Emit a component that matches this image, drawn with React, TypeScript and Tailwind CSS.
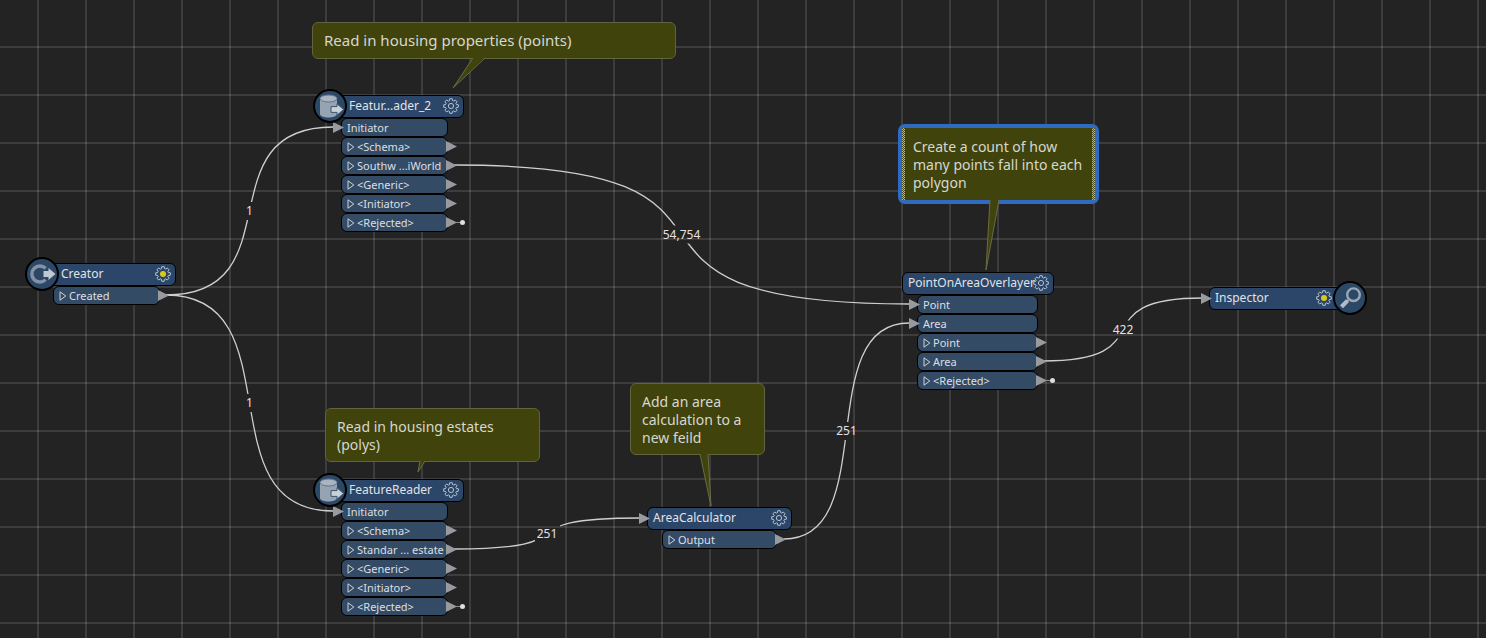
import type { ReactNode } from 'react';

type IconName = 'creator' | 'reader' | 'inspector';

interface Port {
  label: string;
  rejected?: boolean;
}

interface Transformer {
  id: string;
  name: string;
  x: number;
  y: number;
  width: number;
  portWidth: number;
  icon?: IconName;
  needsParams?: boolean;
  // the incoming arrow sits on the header instead of on a port
  headerInput?: boolean;
  inputs: Port[];
  outputs: Port[];
}

interface Link {
  id: string;
  from: [number, number];
  to: [number, number];
  count: string;
}

interface Annotation {
  id: string;
  text: string;
  x: number;
  y: number;
  width: number;
  // tail: two points on the bottom edge, then the tip, relative to the bottom left corner
  tail: [number, number, number, number];
  large?: boolean;
  selected?: boolean;
}

const readerOutputs = (feature: string): Port[] => [
  { label: '<Schema>' },
  { label: feature },
  { label: '<Generic>' },
  { label: '<Initiator>' },
  { label: '<Rejected>', rejected: true },
];

const transformers: Transformer[] = [
  { id: 'creator', name: 'Creator', x: 42, y: 263, width: 134, portWidth: 107, icon: 'creator', needsParams: true, inputs: [], outputs: [{ label: 'Created' }] },
  { id: 'reader2', name: 'Featur...ader_2', x: 330, y: 95, width: 134, portWidth: 107, icon: 'reader', inputs: [{ label: 'Initiator' }], outputs: readerOutputs('Southw ...iWorld') },
  { id: 'reader', name: 'FeatureReader', x: 330, y: 479, width: 134, portWidth: 107, icon: 'reader', inputs: [{ label: 'Initiator' }], outputs: readerOutputs('Standar ... estate') },
  { id: 'area', name: 'AreaCalculator', x: 647, y: 507, width: 145, portWidth: 115, headerInput: true, inputs: [], outputs: [{ label: 'Output' }] },
  {
    id: 'overlayer',
    name: 'PointOnAreaOverlayer',
    x: 902,
    y: 272,
    width: 152,
    portWidth: 121,
    inputs: [{ label: 'Point' }, { label: 'Area' }],
    outputs: [{ label: 'Point' }, { label: 'Area' }, { label: '<Rejected>', rejected: true }],
  },
  { id: 'inspector', name: 'Inspector', x: 1209, y: 287, width: 141, portWidth: 0, icon: 'inspector', needsParams: true, headerInput: true, inputs: [], outputs: [] },
];

const links: Link[] = [
  { id: 'creator-reader2', from: [166, 295], to: [333, 127], count: '1' },
  { id: 'creator-reader', from: [166, 295], to: [333, 511], count: '1' },
  { id: 'reader2-overlayer', from: [454, 165], to: [909, 304], count: '54,754' },
  { id: 'reader-area', from: [454, 549], to: [640, 518], count: '251' },
  { id: 'area-overlayer', from: [784, 539], to: [909, 323], count: '251' },
  { id: 'overlayer-inspector', from: [1043, 361], to: [1203, 298], count: '422' },
];

const annotations: Annotation[] = [
  { id: 'points', text: 'Read in housing properties (points)', x: 312, y: 22, width: 364, tail: [160, 172, 140, 30], large: true },
  { id: 'count', text: 'Create a count of how many points fall into each polygon', x: 901, y: 127, width: 195, tail: [88, 97, 84, 70], selected: true },
  { id: 'polys', text: 'Read in housing estates (polys)', x: 325, y: 408, width: 215, tail: [94, 99, 92, 11] },
  { id: 'calc', text: 'Add an area calculation to a new feild', x: 630, y: 383, width: 135, tail: [69, 77, 80, 52] },
];

const gearPath = (() => {
  const points: string[] = [];
  for (let i = 0; i < 8; i++) {
    const a = (i * Math.PI) / 4;
    const corners = [[-0.27, 5.6], [-0.17, 7.4], [0.17, 7.4], [0.27, 5.6]];
    for (const [da, r] of corners) {
      points.push(`${(8 + r * Math.sin(a + da)).toFixed(2)} ${(8 - r * Math.cos(a + da)).toFixed(2)}`);
    }
  }
  return `M${points.join('L')}Z`;
})();

function Gear({ active }: { active?: boolean }) {
  return (
    <svg viewBox="0 0 16 16" className="size-4" fill="none" stroke="#b9c3ce" strokeLinejoin="round" aria-hidden="true">
      <path d={gearPath} />
      {active ? <circle cx="8" cy="8" r="3" fill="#d8c81c" stroke="none" /> : <circle cx="8" cy="8" r="2.6" />}
    </svg>
  );
}

const badgeDrawings: Record<IconName, ReactNode> = {
  creator: (
    <>
      <path d="M19.6 10.4A8 8 0 1 0 19.6 21.6" fill="none" stroke="#8492a6" strokeWidth="3.4" />
      <path d="M17.5 13h5v-3l7 6-7 6v-3h-5z" fill="#c0c8d2" />
    </>
  ),
  reader: (
    <>
      <path d="M6 8.5v15.5c0 2 4 3.6 8.5 3.6s8.5-1.6 8.5-3.6V8.5z" fill="#96a3b3" />
      <ellipse cx="14.5" cy="8.5" rx="8.5" ry="3.5" fill="#a9b4c1" stroke="#62758c" />
      <path d="M17 16.6h6v-2.8l6.6 5.7-6.6 5.7v-2.8h-6z" fill="#c9d0d8" stroke="#3d5470" />
    </>
  ),
  inspector: (
    <>
      <circle cx="19.5" cy="12.7" r="6.3" fill="none" stroke="#9aa7b7" strokeWidth="2.4" />
      <path d="M15 17.2L13 19.2" stroke="#9aa7b7" strokeWidth="2" />
      <path d="M13.5 18.6L7.5 24.8" stroke="#b3bdc9" strokeWidth="4.2" />
    </>
  ),
};

function Badge({ icon }: { icon: IconName }) {
  const side = icon === 'inspector' ? '-right-[17px]' : '-left-[17px]';
  return (
    <span className={`absolute -top-1.5 size-[34px] rounded-full border-2 border-black bg-[#2c4867] ${side}`}>
      <svg viewBox="1 1 30 30" className="size-[30px]" aria-hidden="true">
        {badgeDrawings[icon]}
      </svg>
    </span>
  );
}

function Arrow() {
  return (
    <svg viewBox="0 0 11 11" className="size-[11px]" aria-hidden="true">
      <path d="M0 0L11 5.5L0 11Z" fill="#979b9f" />
    </svg>
  );
}

function PortRow({ port, output }: { port: Port; output?: boolean }) {
  return (
    <li className="relative flex h-[19px] items-center rounded-md border border-black bg-[#344b65] pl-[5px] text-[11px] leading-4 text-[#dcdfe2]">
      {output ? (
        <button type="button" aria-label={`Expand ${port.label}`} className="mr-0.5 flex w-2 justify-center">
          <svg viewBox="0 0 8 10" className="h-2.5 w-2" fill="none" stroke="#cdd3d9" aria-hidden="true">
            <path d="M1 0.8V9.2L6.8 5Z" />
          </svg>
        </button>
      ) : (
        <span className="absolute -left-[9px]">
          <Arrow />
        </span>
      )}
      <span className="whitespace-pre">{port.label}</span>
      {output && (
        <span className="absolute -right-2.5 flex items-center">
          <Arrow />
        </span>
      )}
      {port.rejected && (
        <span className="absolute -right-[18px] flex items-center">
          <span className="h-px w-1 bg-[#8b8b8b]" />
          <span className="size-[5px] rounded-full bg-[#dedede]" />
        </span>
      )}
    </li>
  );
}

function TransformerNode({ node }: { node: Transformer }) {
  const left = node.icon === 'creator' || node.icon === 'reader';
  return (
    <section className="absolute" style={{ left: node.x, top: node.y, width: node.width }}>
      <header
        className={`flex h-[23px] items-center justify-between rounded-md border border-black bg-[#2b4668] pb-px text-xs text-[#e0e3e6] ${
          left ? 'pl-[18px]' : 'pl-[5px]'
        } ${node.icon === 'inspector' ? 'pr-[17px]' : 'pr-1'}`}
      >
        <h2 className="min-w-0 whitespace-nowrap">{node.name}</h2>
        <button type="button" aria-label={`${node.name} parameters`} className="shrink-0">
          <Gear active={node.needsParams} />
        </button>
      </header>
      {node.headerInput && (
        <span className="absolute -left-2 top-[6px]">
          <Arrow />
        </span>
      )}
      {node.outputs.length > 0 && (
        <div className={left ? 'ml-[11px]' : 'ml-[15px]'} style={{ width: node.portWidth }}>
          {node.inputs.length > 0 && (
            <ul>
              {node.inputs.map((port) => (
                <PortRow key={port.label} port={port} />
              ))}
            </ul>
          )}
          <ul>
            {node.outputs.map((port) => (
              <PortRow key={port.label} port={port} output />
            ))}
          </ul>
        </div>
      )}
      {node.icon && <Badge icon={node.icon} />}
    </section>
  );
}

function Note({ note }: { note: Annotation }) {
  const [a, b, tipX, tipY] = note.tail;
  return (
    <aside
      className={`absolute border bg-[#41430c] px-[11px] text-[#d6d8d0] ${
        note.large ? 'pt-[7px] pb-2 text-[15px] leading-5' : note.selected ? 'pt-2.5 pb-2 text-sm leading-[18px]' : 'pt-[9px] pb-[7px] text-sm leading-[18px]'
      } ${note.selected ? 'rounded-sm border-[#5f6f5a] outline-4 -outline-offset-1 outline-[#2f6bc2]' : 'rounded-md border-[#62643c]'}`}
      style={{ left: note.x, top: note.y, width: note.width }}
    >
      {note.selected && (
        <>
          <span className="absolute inset-y-0 left-0 w-[3px] bg-[repeating-conic-gradient(#b5b596_0%_25%,#4a4b1c_0%_50%)] bg-[size:2px_2px]" />
          <span className="absolute inset-y-0 right-0 w-[3px] bg-[repeating-conic-gradient(#b5b596_0%_25%,#4a4b1c_0%_50%)] bg-[size:2px_2px]" />
        </>
      )}
      <p>{note.text}</p>
      <svg className="absolute left-0 top-full overflow-visible" width="1" height="1" aria-hidden="true">
        <path d={`M${a} -1L${tipX} ${tipY}L${b} -1Z`} fill="#41430c" />
        <path d={`M${a} 0L${tipX} ${tipY}L${b} 0`} fill="none" stroke="#6a6c48" />
      </svg>
    </aside>
  );
}

function linkPath({ from: [x1, y1], to: [x2, y2] }: Link) {
  const bend = (x2 - x1) * 0.78;
  return `M${x1} ${y1}C${x1 + bend} ${y1} ${x2 - bend} ${y2} ${x2} ${y2}`;
}

function Links() {
  return (
    <svg className="absolute inset-0 size-full" fill="none" aria-hidden="true">
      {links.map((link) => (
        <g key={link.id}>
          {/* leave a gap in the line for the feature count */}
          <mask id={link.id} maskUnits="userSpaceOnUse" x="0" y="0" width="100%" height="100%">
            <rect width="100%" height="100%" fill="#fff" />
            <rect x={(link.from[0] + link.to[0]) / 2 - 12} y={(link.from[1] + link.to[1]) / 2 - 9} width="25" height="18" fill="#000" />
          </mask>
          <path d={linkPath(link)} stroke="#cfcfcf" strokeWidth="1.3" mask={`url(#${link.id})`} />
        </g>
      ))}
    </svg>
  );
}

export default function App() {
  return (
    <main className="relative min-h-screen w-full overflow-hidden bg-[#232323] bg-[linear-gradient(#ffffff1e_2px,transparent_2px),linear-gradient(90deg,#ffffff1e_2px,transparent_2px)] bg-[size:48px_48px] bg-[position:37px_46px] font-['Noto_Sans',sans-serif]">
      <Links />
      {links.map((link) => (
        <span
          key={link.id}
          className="absolute -translate-x-1/2 -translate-y-1/2 text-xs leading-4 text-[#e6e0e6]"
          style={{ left: (link.from[0] + link.to[0]) / 2, top: (link.from[1] + link.to[1]) / 2 }}
        >
          {link.count}
        </span>
      ))}
      {annotations.map((note) => (
        <Note key={note.id} note={note} />
      ))}
      {transformers.map((node) => (
        <TransformerNode key={node.id} node={node} />
      ))}
    </main>
  );
}
